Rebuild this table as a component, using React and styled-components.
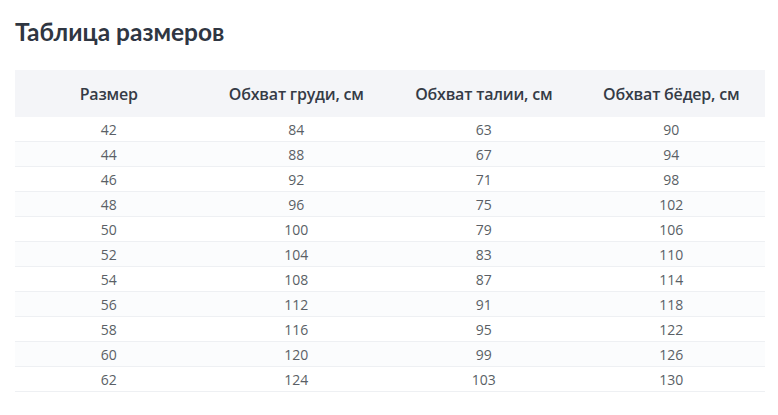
import styled, { createGlobalStyle } from "styled-components";

const GlobalStyle = createGlobalStyle`
  body {
    margin: 0;
    background: #fff;
    font-family: "Open Sans", "Noto Sans", sans-serif;
  }
`;

const sizes = [
  [42, 84, 63, 90],
  [44, 88, 67, 94],
  [46, 92, 71, 98],
  [48, 96, 75, 102],
  [50, 100, 79, 106],
  [52, 104, 83, 110],
  [54, 108, 87, 114],
  [56, 112, 91, 118],
  [58, 116, 95, 122],
  [60, 120, 99, 126],
  [62, 124, 103, 130],
];

const columns = ["Размер", "Обхват груди, см", "Обхват талии, см", "Обхват бёдер, см"];

function App() {
  return (
    <>
      <GlobalStyle />
      <Wrapper>
        <Title>Таблица размеров</Title>
        <Table>
          <thead>
            <tr>
              {columns.map((c) => (
                <Th key={c}>{c}</Th>
              ))}
            </tr>
          </thead>
          <tbody>
            {sizes.map((row) => (
              <Row key={row[0]}>
                {row.map((v, i) => (
                  <Td key={i}>{v}</Td>
                ))}
              </Row>
            ))}
          </tbody>
        </Table>
      </Wrapper>
    </>
  );
}

export default App;

const Wrapper = styled.div`
  padding: 14px 13px 0 15px;
`;

const Title = styled.h1`
  margin: 0 0 20px;
  font-family: Lato, "Open Sans", sans-serif;
  font-size: 24.5px;
  line-height: 36px;
  font-weight: 700;
  color: #2f3642;
`;

const Table = styled.table`
  width: 750px;
  border-collapse: collapse;
  table-layout: fixed;
`;

const Th = styled.th`
  height: 47px;
  padding: 0;
  background: #f4f5f8;
  color: #353b46;
  font-size: 16px;
  font-weight: 600;
  letter-spacing: -0.2px;
  text-align: center;
`;

const Row = styled.tr`
  border-bottom: 1px solid #eef0f3;

  &:nth-child(even) {
    background: #fbfcfd;
  }
`;

const Td = styled.td`
  height: 24px;
  padding: 0;
  color: #5a5f66;
  font-size: 14px;
  font-weight: 400;
  text-align: center;
`;
